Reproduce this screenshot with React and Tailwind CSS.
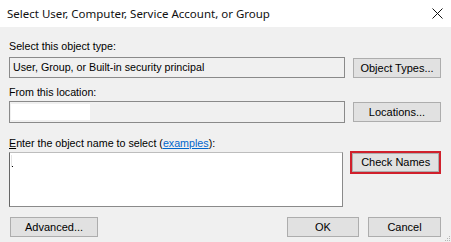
import React from 'react';

const font = { fontFamily: '"Liberation Sans", Arial, sans-serif' };

function Button({ children, className = '' }) {
  return (
    <div
      className={`flex items-center justify-center h-[20px] border border-[#adadad] bg-[#e1e1e1] text-[11px] text-black leading-none ${className}`}
    >
      {children}
    </div>
  );
}

export default function App() {
  return (
    <div className="w-[451px] h-[242px] overflow-hidden select-none" style={font}>
      {/* title bar */}
      <div className="h-[27px] bg-white flex items-center justify-between pl-[7px] pr-[8px]">
        <span className="text-[11.5px] text-[#111]" style={{ fontFamily: '"Noto Sans", "Open Sans", sans-serif' }}>
          Select User, Computer, Service Account, or Group
        </span>
        <svg width="11" height="11" viewBox="0 0 11 11" className="mb-[1px]">
          <path d="M0.5 0.5 L10.5 10.5 M10.5 0.5 L0.5 10.5" stroke="#111" strokeWidth="1" fill="none" />
        </svg>
      </div>

      {/* body */}
      <div className="relative h-[215px] bg-[#f0f0f0] pl-[9px] pr-[10px]">
        <div className="pt-[13px] text-[10.7px] leading-[13px] text-black">Select this object type:</div>
        <div className="mt-[4px] flex items-start">
          <div className="w-[336px] h-[21px] border border-[#8a8a8a] bg-[#f0f0f0] flex items-center pl-[3px] text-[10.7px] text-black">
            User, Group, or Built-in security principal
          </div>
          <Button className="ml-[8px] mt-[1px] w-[88px]">Object Types...</Button>
        </div>

        <div className="mt-[8px] text-[10.7px] leading-[13px] text-black">From this location:</div>
        <div className="mt-[2px] flex items-start">
          <div className="w-[336px] h-[22px] border border-[#8a8a8a] bg-[#f0f0f0] flex items-center pl-[1px]">
            <div className="w-[79px] h-[16px] bg-white" />
          </div>
          <Button className="ml-[8px] mt-[1px] w-[88px]">Locations...</Button>
        </div>

        <div className="mt-[14px] text-[10.7px] leading-[13px] text-black">
          <span className="underline underline-offset-1">E</span>nter the object name to select (
          <span className="text-[#0066cc] underline underline-offset-1">examples</span>):
        </div>
        <div className="mt-[1px] flex items-start">
          <div className="relative w-[336px] h-[55px] mt-[1px] border border-[#8a8a8a] border-l-[#666] border-t-[#bdbdbd] bg-white">
            <div className="absolute left-[1px] top-[2px] w-[1px] h-[12px] bg-[#e4e4e4]" />
            <div className="absolute left-[2px] top-[13px] w-[1px] h-[1px] bg-black" />
          </div>
          <div className="ml-[7px] border-2 border-[#d0202c] w-[91px] h-[23px] p-0">
            <div className="flex items-center justify-center h-full border border-[#adadad] bg-[#e1e1e1] text-[11px] text-black leading-none">
              Check Names
            </div>
          </div>
        </div>

        <div className="mt-[10px] flex items-start">
          <Button className="ml-[1px] w-[88px]">Advanced...</Button>
          <div className="flex-1" />
          <Button className="w-[72px]">OK</Button>
          <Button className="ml-[9px] w-[73px]">Cancel</Button>
        </div>

        {/* size grip */}
        <svg width="7" height="7" viewBox="0 0 7 7" className="absolute right-0 bottom-0">
          <rect x="5" y="1" width="1" height="1" fill="#b5b5b5" />
          <rect x="3" y="3" width="1" height="1" fill="#b5b5b5" />
          <rect x="5" y="3" width="1" height="1" fill="#b5b5b5" />
          <rect x="1" y="5" width="1" height="1" fill="#b5b5b5" />
          <rect x="3" y="5" width="1" height="1" fill="#b5b5b5" />
          <rect x="5" y="5" width="1" height="1" fill="#b5b5b5" />
        </svg>
      </div>
    </div>
  );
}
